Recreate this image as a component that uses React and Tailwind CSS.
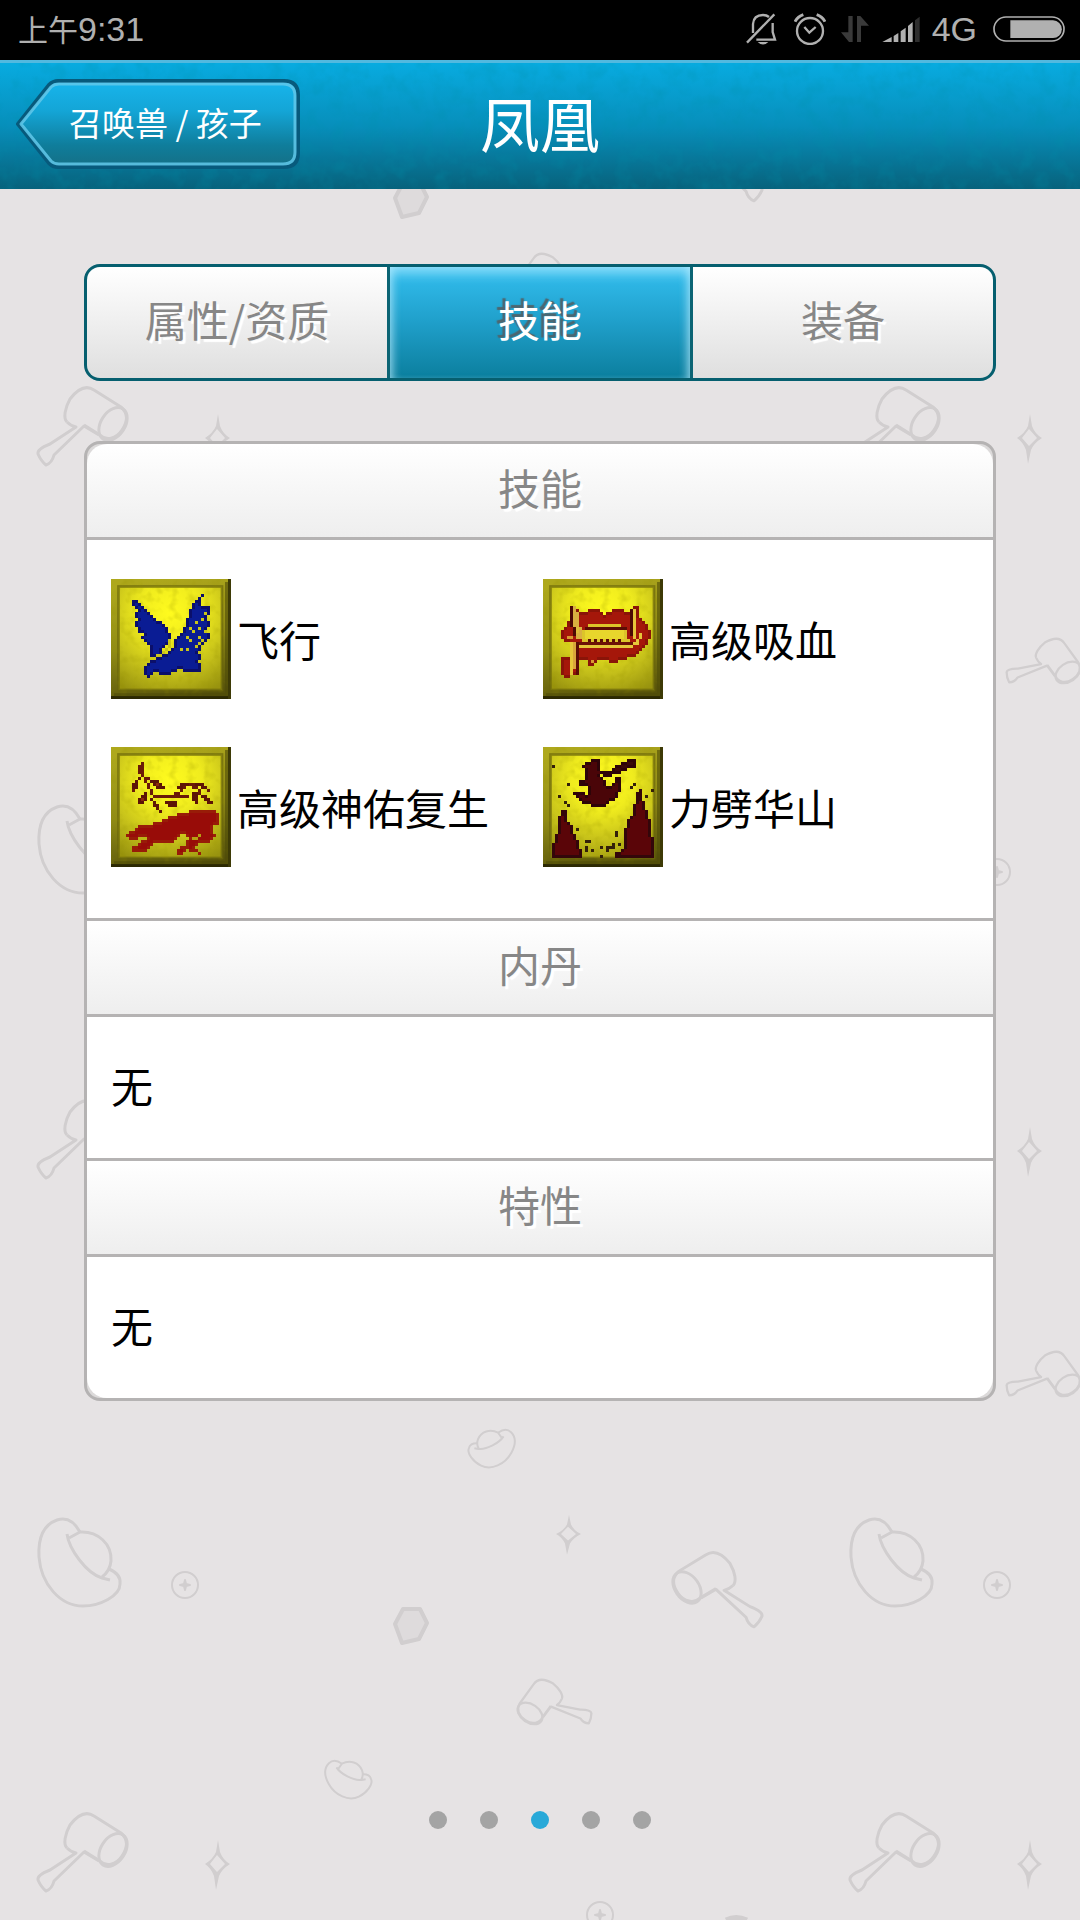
import React from "react";

/* ---------- status bar glyphs ---------- */

function StatusIcons() {
  return (
    <div className="flex items-center text-[#b0b0b0]">
      <svg className="h-8 w-[31px]" viewBox="17 15 93 96" fill="none" stroke="currentColor" strokeWidth="7" aria-hidden="true">
        <path d="M38 75 V48 Q40 21 68 21 Q79 21 86 27" />
        <path d="M97 45 V72 L104 95 H48" />
        <path d="M20 104 L102 19" />
        <path d="M52 102 H84 Q68 117 52 102 Z" fill="currentColor" stroke="none" />
      </svg>
      <svg className="ml-[17px] h-8 w-8" viewBox="162 15 96 96" fill="none" stroke="currentColor" strokeWidth="7" aria-hidden="true">
        <circle cx="210" cy="69" r="39" />
        <path d="M165 41 Q173 26 190 20 M255 41 Q247 26 230 20" strokeWidth="9" />
        <path d="M193 57 L208 74 L227 57" strokeWidth="7" />
      </svg>
      <svg className="ml-[15px] h-[26px] w-7 text-[#3a3a3a]" viewBox="302 27 84 78" fill="currentColor" aria-hidden="true">
        <path d="M324 27 H337 V105 H326 L302 76 H324 Z" />
        <path d="M350 27 H360 L386 56 H362 V105 H350 Z" />
      </svg>
      <svg className="ml-[13px] h-[26px] w-[38px]" viewBox="427 27 114 78" fill="currentColor" aria-hidden="true">
        <path d="M428 105 L456 90 V105 Z M462 87 L476 78 V105 H462 Z M483 73 L498 62 V105 H483 Z M505 57 L519 45 V105 H505 Z" />
        <path d="M526 40 L540 29 V105 H526 Z" fill="#2e2e2e" />
      </svg>
      <span className="ml-3 text-[34px] leading-none">4G</span>
      <svg className="ml-4 h-[26px] w-[72px]" viewBox="758 27 216 78" aria-hidden="true">
        <rect x="761" y="30" width="210" height="72" rx="36" fill="none" stroke="currentColor" strokeWidth="5" />
        <path d="M810 40 H938 A26 26 0 0 1 938 93 H810 Z" fill="currentColor" />
      </svg>
    </div>
  );
}

/* ---------- wallpaper ---------- */

function Hammer() {
  return (
    <g>
      <path d="M29 37 C25 33 27 23 32 14 C39 5 47 -1 56 5 L83 22 C90 28 90 36 84 45 C78 54 68 56 62 50 L46 40" />
      <path d="M29 37 Q33 41 38 42 L12 59 Q-1 64 0 69 Q3 76 8 80 Q14 78 16 70 L46 41 L61 50" />
      <ellipse cx="75" cy="39" rx="12" ry="18" transform="rotate(34 75 39)" />
    </g>
  );
}

function Ingot() {
  return (
    <g>
      <path d="M42 13 C36 2 28 -2 19 1 C5 6 0 20 1 38 C3 65 22 87 45 87 C62 87 82 77 82 65 C83 58 78 53 71 50" />
      <path d="M29 15 C31 30 48 54 64 59 L72 61" />
      <path d="M31 19 L42 13 C60 12 74 25 73 42 Q72 52 64 58" />
    </g>
  );
}

function Coin() {
  return (
    <g>
      <circle r="13" />
      <path d="M0 -5 L1 -1 L5 0 L1 1 L0 5 L-1 1 L-5 0 L-1 -1 Z" fill="#d1cecf" />
    </g>
  );
}

function Sparkle() {
  return (
    <path
      fillRule="evenodd"
      fill="#d1cecf"
      stroke="none"
      d="M1 -24 L3 -12 Q6 -4 13 0 Q5 5 2 12 L-1 26 L-3 12 Q-6 4 -12 0 Q-4 -5 -1 -12 Z M0 -9 L-7 0 L0 8 L8 0 Z"
    />
  );
}

function Wallpaper() {
  return (
    <svg className="absolute inset-0 h-full w-full" aria-hidden="true">
      <defs>
        <pattern id="toys" x="0" y="1207" width="812" height="713" patternUnits="userSpaceOnUse">
          <g fill="none" stroke="#d1cecf" strokeWidth="3" strokeLinejoin="round">
            <g transform="translate(38 312)"><Ingot /></g>
            <g transform="translate(185 378)" strokeWidth="2"><Coin /></g>
            <path d="M403 402 h17 l7 14 l-8 16 l-17 4 l-7 -19 Z" strokeWidth="4" fill="#dedbdc" />
            <g transform="translate(348 571) rotate(-25) scale(0.5) translate(-41 -44)" strokeWidth="4"><Ingot /></g>
            <g transform="translate(492 240) scale(-0.5 0.5) rotate(-25) translate(-41 -44)" strokeWidth="4"><Ingot /></g>
            <g transform="translate(762 343) scale(-1 0.96)"><Hammer /></g>
            <g transform="translate(568 327) scale(1 0.8)"><Sparkle /></g>
            <g transform="translate(552 500) scale(-0.76 0.76) rotate(22) translate(-45 -42)"><Hammer /></g>
            <g transform="translate(234 172) scale(0.76) rotate(22) translate(-45 -42)"><Hammer /></g>
            <g transform="translate(38 604)"><Hammer /></g>
            <g transform="translate(217 657)"><Sparkle /></g>
            <g transform="translate(600 708)" strokeWidth="2"><Coin /></g>
            <path d="M726 713 Q736 708 747 713" strokeWidth="5" />
          </g>
        </pattern>
      </defs>
      <rect width="100%" height="100%" fill="url(#toys)" />
    </svg>
  );
}

/* ---------- skill pictures, drawn on a 40 x 40 cell grid ---------- */

const CELL = 9;
const GRID = 40;

function inside(x, y, pts) {
  let hit = false;
  for (let i = 0, j = pts.length - 1; i < pts.length; j = i++) {
    const [xi, yi] = pts[i];
    const [xj, yj] = pts[j];
    if (yi > y !== yj > y && x < ((xj - xi) * (y - yi)) / (yj - yi) + xi) hit = !hit;
  }
  return hit;
}

function toPoints(list) {
  const pts = [];
  for (let i = 0; i < list.length; i += 2) pts.push([list[i], list[i + 1]]);
  return pts;
}

function rasterize(art) {
  const cells = new Map();
  const put = (cx, cy, fill) => cells.set(cy * GRID + cx, fill);
  art.shapes.forEach((shape) => {
    const pts = toPoints(shape.pts).map(([x, y]) => [x - art.origin[0], y - art.origin[1]]);
    if (shape.kind === "dots") {
      pts.forEach(([x, y]) => put(Math.floor(x / CELL), Math.floor(y / CELL), shape.fill));
    } else if (shape.kind === "line") {
      for (let i = 1; i < pts.length; i++) {
        const [x0, y0] = pts[i - 1];
        const [x1, y1] = pts[i];
        const steps = Math.ceil(Math.max(Math.abs(x1 - x0), Math.abs(y1 - y0)) / CELL);
        for (let s = 0; s <= steps; s++) {
          const t = steps ? s / steps : 0;
          put(Math.floor((x0 + (x1 - x0) * t) / CELL), Math.floor((y0 + (y1 - y0) * t) / CELL), shape.fill);
        }
      }
    } else {
      const at = (cx, cy) => inside((cx + 0.5) * CELL, (cy + 0.5) * CELL, pts);
      for (let cy = 0; cy < GRID; cy++) {
        for (let cx = 0; cx < GRID; cx++) {
          if (!at(cx, cy)) continue;
          const rim = !at(cx - 1, cy) || !at(cx + 1, cy) || !at(cx, cy - 1) || !at(cx, cy + 1);
          put(cx, cy, rim && shape.rim ? shape.rim : shape.fill);
        }
      }
    }
  });
  return [...cells].map(([key, fill]) => ({ x: key % GRID, y: Math.floor(key / GRID), fill }));
}

const WINGS = {
  origin: [34, 27],
  shapes: [
    { fill: "#0a1c94", rim: "#0b0f6a", pts: [100,86,116,93,128,112,150,130,170,146,190,162,208,180,214,205,205,225,190,240,172,262,148,262,150,232,136,217,124,202,140,195,118,187,108,170,108,153,124,152,104,137,102,122,118,122,100,102] },
    { fill: "#0a1c94", rim: "#0b0f6a", pts: [310,70,304,105,324,106,334,118,320,145,330,160,324,185,332,195,312,225,292,250,312,262,284,270,306,285,304,308,255,308,240,296,225,308,185,316,160,302,148,326,130,314,132,288,165,268,200,250,220,232,225,210,245,186,260,158,266,128,283,95] },
    { kind: "line", fill: "#c9c41a", pts: [212,215,206,232,190,248,176,256] },
    { kind: "dots", fill: "#c9c41a", pts: [290,155,304,150,300,176,282,188,262,200,296,198,276,214,310,210,286,232,266,236,300,250,248,240,318,186,296,222,272,172,296,276,316,130] },
  ],
};

const REVIVE = {
  origin: [34, 37],
  shapes: [
    { kind: "line", fill: "#6a1a08", pts: [126,82,130,125,142,150,165,182,195,187,225,180,250,160,270,150,295,165,320,190] },
    { kind: "line", fill: "#6a1a08", pts: [205,182,262,184] },
    { kind: "line", fill: "#6a1a08", pts: [126,125,106,145,98,165] },
    { kind: "line", fill: "#6a1a08", pts: [142,132,165,140,192,158] },
    { kind: "line", fill: "#6a1a08", pts: [272,150,300,148,326,168] },
    { fill: "#8c2a0a", rim: "#6a1a08", pts: [120,82,133,82,135,120,117,120] },
    { fill: "#8c2a0a", rim: "#5c1406", pts: [96,168,102,142,122,128,116,155] },
    { fill: "#8c2a0a", rim: "#5c1406", pts: [146,134,176,136,196,162,168,158] },
    { fill: "#8c2a0a", rim: "#5c1406", pts: [114,216,120,185,142,168,140,195] },
    { fill: "#8c2a0a", rim: "#5c1406", pts: [150,186,176,206,186,236,162,218] },
    { fill: "#8c2a0a", rim: "#5c1406", pts: [194,200,220,196,238,205,222,218,205,214] },
    { fill: "#8c2a0a", rim: "#5c1406", pts: [222,168,245,144,272,144,248,162] },
    { fill: "#8c2a0a", rim: "#5c1406", pts: [284,146,306,142,334,168,302,160] },
    { fill: "#8c2a0a", rim: "#5c1406", pts: [274,168,292,176,300,212,280,202] },
    { fill: "#8c2a0a", rim: "#5c1406", pts: [302,178,322,184,342,210,316,202] },
    { fill: "#980c08", rim: "#981c08", pts: [78,306,100,286,125,270,160,266,185,258,210,246,250,233,290,226,340,228,362,240,359,268,337,277,349,305,337,319,305,326,284,336,308,360,262,344,240,364,228,350,262,325,265,305,245,294,225,324,190,324,165,322,142,349,110,356,92,342,130,318,155,302,120,309,93,317] },
    { kind: "line", fill: "#b5a012", pts: [282,312,300,306] },
  ],
};

const BLOOD = {
  origin: [39, 27],
  shapes: [
    { fill: "#a5170a", rim: "#8a1408", pts: [92,190,108,165,122,150,124,112,142,112,152,130,180,120,210,120,225,134,245,120,280,120,300,132,306,108,322,108,328,145,347,160,364,195,347,232,310,260,260,277,200,270,192,294,174,284,170,270,146,270,144,312,110,324,92,314,92,265,116,258,116,218,98,212] },
    { fill: "#e8d62c", rim: "#dcc42a", pts: [158,180,180,160,270,160,292,184,296,212,156,214] },
    { kind: "line", fill: "#5c0d05", pts: [176,178,282,178] },
    { kind: "dots", fill: "#5c0d05", pts: [166,178,178,212,196,212,214,212,232,212,250,212,268,212] },
    { kind: "line", fill: "#6d1206", pts: [150,220,300,220] },
    { kind: "line", fill: "#e6c63a", pts: [148,230,220,232,300,230,318,218,334,196] },
    { fill: "#e0bd3a", rim: "#d9b040", pts: [130,112,140,112,158,200,148,214,134,200] },
    { kind: "line", fill: "#4c0a04", pts: [128,112,128,158,130,194] },
    { kind: "line", fill: "#e6c63a", pts: [316,118,316,160,316,200] },
    { kind: "line", fill: "#4c0a04", pts: [304,118,304,190] },
    { kind: "line", fill: "#e6c63a", pts: [124,222,124,312] },
    { kind: "line", fill: "#d9a63a", pts: [132,222,132,290] },
    { kind: "line", fill: "#5c0d05", pts: [141,222,141,306] },
    { kind: "dots", fill: "#d99a30", pts: [184,276,116,206,124,198] },
  ],
};

const CLEAVE = {
  origin: [39, 37],
  shapes: [
    { fill: "#4a0508", rim: "#2e0408", pts: [150,90,180,84,184,73,210,73,210,100,217,110,214,125,230,150,250,150,258,128,272,126,274,160,264,187,240,202,225,217,185,214,160,204,140,192,128,168,150,175,172,178,175,154,148,150,148,136,168,130,165,105] },
    { fill: "#3a0a08", rim: "#2e0408", pts: [212,112,245,104,265,90,290,78,320,70,318,94,280,108,255,121,220,132] },
    { fill: "#5a0508", rim: "#33060a", pts: [96,226,108,228,115,262,128,280,135,305,148,330,157,370,66,370,68,340,75,310,85,290,88,250] },
    { fill: "#5a0508", rim: "#33060a", pts: [326,163,336,163,338,195,348,215,352,240,364,265,362,290,374,320,374,370,250,370,262,352,280,345,285,310,284,285,290,265,305,240,315,205] },
    { kind: "dots", fill: "#33200a", pts: [70,95,88,185,115,148,108,203,116,212,312,150,305,158,350,185,368,168,142,283,170,322,180,322,190,348,184,344,210,342,215,365,240,340,262,298,262,290,246,325,236,348,232,340,172,345,270,325,248,334,170,338] },
  ],
};

function SkillPicture({ art }) {
  return (
    <svg className="size-[120px] shrink-0" viewBox="0 0 40 40" aria-hidden="true">
      <defs>
        <radialGradient id="plate" cx="0.5" cy="0.25" r="0.85">
          <stop offset="0" stopColor="#fffb1e" />
          <stop offset="0.35" stopColor="#f0ec1e" />
          <stop offset="0.7" stopColor="#c4bf1a" />
          <stop offset="1" stopColor="#98930f" />
        </radialGradient>
        <linearGradient id="frame" x1="0.4" y1="0" x2="0.6" y2="1">
          <stop offset="0" stopColor="#aea81c" />
          <stop offset="0.5" stopColor="#918c16" />
          <stop offset="1" stopColor="#55510a" />
        </linearGradient>
        <filter id="grit" x="0" y="0" width="1" height="1">
          <feTurbulence type="fractalNoise" baseFrequency="0.35" numOctaves="2" seed="4" />
          <feColorMatrix values="0 0 0 0 0.3  0 0 0 0 0.28  0 0 0 0 0  0 0 0 1.6 -0.75" />
        </filter>
      </defs>
      <rect width="40" height="40" fill="url(#frame)" />
      <rect x="2.5" y="2.5" width="34.5" height="34.5" fill="url(#plate)" stroke="#6a650b" strokeWidth="0.9" strokeOpacity="0.7" />
      <rect width="40" height="40" filter="url(#grit)" opacity="0.4" />
      <path d="M0 39.5 H40" stroke="#2c2903" />
      <path d="M39.5 0 V40" stroke="#3d3a06" />
      <path d="M38.5 1 V39 M1 38.6 H39" stroke="#4f4b08" strokeOpacity="0.6" />
      <g shapeRendering="crispEdges">
        {rasterize(art).map((c) => (
          <rect key={`${c.x}-${c.y}`} x={c.x} y={c.y} width="1" height="1" fill={c.fill} />
        ))}
      </g>
    </svg>
  );
}

/* ---------- page pieces ---------- */

function BackButton() {
  return (
    <button type="button" className="relative ml-4 h-[90px] w-[284px] shrink-0 pb-1 pl-[53px] text-left text-[33px] leading-none text-white">
      <svg className="absolute inset-0 h-full w-full" viewBox="0 0 284 90" preserveAspectRatio="none" aria-hidden="true">
        <defs>
          <linearGradient id="back" x1="0" y1="0" x2="0" y2="1">
            <stop offset="0" stopColor="#17b5ec" />
            <stop offset="0.35" stopColor="#14a5d6" />
            <stop offset="0.75" stopColor="#0f7d9b" />
            <stop offset="1" stopColor="#156f85" />
          </linearGradient>
        </defs>
        <path d="M2 45 L33 6 Q37 2 42 2 H268 Q282 2 282 16 V74 Q282 88 268 88 H42 Q37 88 33 84 Z" fill="url(#back)" stroke="#075a7c" strokeWidth="4" strokeLinejoin="round" />
        <path d="M5 45 L35 8 Q38 5 43 5 H267 Q279 5 279 17 V73 Q279 85 267 85 H43 Q38 85 35 82 Z" fill="none" stroke="#62c8ea" strokeOpacity="0.85" strokeWidth="3" strokeLinejoin="round" />
      </svg>
      <span className="relative">召唤兽 / 孩子</span>
    </button>
  );
}

function Header() {
  return (
    <header className="relative border-t-[3px] border-[#52b9df] bg-linear-to-b from-[#08abe0] via-[#078fbb] to-[#07627c]">
      <svg className="absolute inset-0 h-full w-full opacity-30" aria-hidden="true">
        <filter id="grain" x="0" y="0" width="1" height="1">
          <feTurbulence type="fractalNoise" baseFrequency="0.06" numOctaves="3" seed="9" />
          <feColorMatrix values="0 0 0 0 0  0 0 0 0 0.28  0 0 0 0 0.4  0 0 0 2 -0.85" />
        </filter>
        <rect width="100%" height="100%" filter="url(#grain)" />
      </svg>
      <div className="relative grid h-[126px] grid-cols-[1fr_auto_1fr] items-center pb-1">
        <BackButton />
        <h1 className="pb-1 text-[60px] leading-none text-white">凤凰</h1>
      </div>
    </header>
  );
}

const TABS = ["属性/资质", "技能", "装备"];

function Tabs({ active }) {
  return (
    <div role="tablist" className="grid grid-cols-3 gap-[3px] overflow-hidden rounded-[16px] border-[3px] border-[#065f6f] bg-[#0b6474]">
      {TABS.map((name) => (
        <button
          key={name}
          type="button"
          role="tab"
          aria-selected={name === active}
          className={
            name === active
              ? "h-[111px] bg-linear-to-b from-[#33bff0] via-[#1f9fca] to-[#0b7f9e] pb-2 text-[42px] leading-none text-white shadow-[inset_0_8px_12px_-2px_rgba(190,238,255,0.65),inset_8px_0_10px_-6px_rgba(190,238,255,0.6),inset_-8px_0_10px_-6px_rgba(190,238,255,0.6)] [text-shadow:-3px_-3px_1px_#4d666f]"
              : "h-[111px] bg-linear-to-b from-white to-[#dfdfdf] pb-2 text-[42px] leading-none text-[#878787] [text-shadow:3px_3px_1px_#ffffff]"
          }
        >
          {name}
        </button>
      ))}
    </div>
  );
}

function SectionTitle({ children, className }) {
  return (
    <h2 className={`flex items-center justify-center border-b-[3px] border-[#b5b3b3] bg-linear-to-b from-white to-[#eeeeee] pb-2 text-[42px] leading-none text-[#878787] [text-shadow:3px_3px_1px_#ffffff] ${className}`}>
      {children}
    </h2>
  );
}

const SKILLS = [
  { name: "飞行", art: WINGS },
  { name: "高级吸血", art: BLOOD },
  { name: "高级神佑复生", art: REVIVE },
  { name: "力劈华山", art: CLEAVE },
];

function SkillPanel() {
  return (
    <section className="overflow-hidden rounded-[16px] border-[3px] border-[#b5b3b3] bg-[#dcdada]">
      <SectionTitle className="h-24 rounded-t-[20px]">技能</SectionTitle>
      <ul className="grid grid-cols-[432px_1fr] gap-y-12 bg-white px-6 pt-[39px] pb-[51px]">
        {SKILLS.map((skill) => (
          <li key={skill.name} className="flex items-center gap-1.5 text-[42px] leading-none whitespace-nowrap text-black">
            <SkillPicture art={skill.art} />
            {skill.name}
          </li>
        ))}
      </ul>
      <SectionTitle className="h-[99px] border-t-[3px]">内丹</SectionTitle>
      <p className="flex h-[141px] items-center bg-white px-6 pb-1.5 text-[42px] leading-none text-black">无</p>
      <SectionTitle className="h-[99px] border-t-[3px]">特性</SectionTitle>
      <p className="flex h-[141px] items-center rounded-b-[20px] bg-white px-6 pb-1.5 text-[42px] leading-none text-black">无</p>
    </section>
  );
}

function Pager({ count, current }) {
  return (
    <nav aria-label="分页" className="mt-auto flex justify-center gap-[33px] pb-[91px]">
      {Array.from({ length: count }, (_, i) => (
        <button
          key={i}
          type="button"
          aria-label={`第${i + 1}页`}
          className={i === current ? "size-[18px] rounded-full bg-[#29a9d8]" : "size-[18px] rounded-full bg-[#a4a4a4]"}
        />
      ))}
    </nav>
  );
}

export default function App() {
  return (
    <div className="relative flex min-h-screen flex-col bg-[#e6e3e4] font-['Noto_Sans_CJK_SC',sans-serif]">
      <Wallpaper />
      <div className="relative flex h-[60px] items-center justify-between bg-black pr-[15px] pb-0.5 pl-[18px] font-['Liberation_Sans','Noto_Sans_CJK_SC',sans-serif] text-[#b0b0b0]">
        <p className="text-[34px] leading-none">
          <span className="text-[30px]">上午</span>9:31
        </p>
        <StatusIcons />
      </div>
      <Header />
      <main className="relative flex flex-1 flex-col">
        <div className="flex flex-col gap-[60px] px-[84px] pt-[75px]">
          <Tabs active="技能" />
          <SkillPanel />
        </div>
        <Pager count={5} current={2} />
      </main>
    </div>
  );
}
